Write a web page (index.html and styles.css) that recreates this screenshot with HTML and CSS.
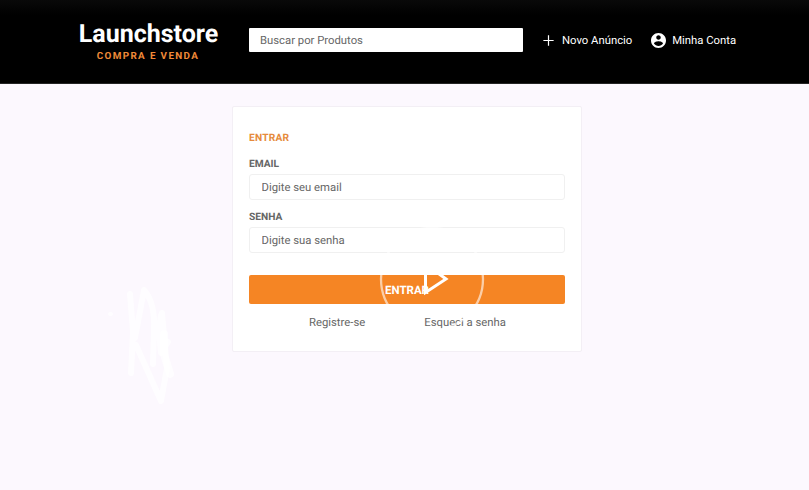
FILE: index.html
```
<!DOCTYPE html>
<html lang="pt-BR">
<head>
<meta charset="utf-8">
<title>Launchstore</title>
<link rel="stylesheet" href="styles.css">
</head>
<body>
<header class="header">
  <a class="logo"><strong class="logo-name">Launchstore</strong><span class="logo-tag">COMPRA E VENDA</span></a>
  <input class="search" type="text" placeholder="Buscar por Produtos">
  <nav class="nav">
    <a class="nav-link"><svg class="plus" viewBox="0 0 12 12"><path d="M6 .4v11.200M.4 6h11.200" stroke="#fff" stroke-width="1.300" fill="none"/></svg><span class="nav-text">Novo Anúncio</span></a>
    <a class="nav-link account"><svg class="user" viewBox="2 2 20 20"><path fill="#fff" d="M12 2C6.48 2 2 6.48 2 12s4.48 10 10 10 10-4.48 10-10S17.52 2 12 2zm0 3c1.66 0 3 1.34 3 3s-1.34 3-3 3-3-1.34-3-3 1.34-3 3-3zm0 14.2c-2.5 0-4.71-1.28-6-3.22.03-1.99 4-3.08 6-3.08 1.99 0 5.97 1.09 6 3.08-1.29 1.94-3.5 3.22-6 3.22z"/></svg><span class="nav-text">Minha Conta</span></a>
  </nav>
</header>
<main class="main">
  <form class="card">
    <h1 class="title">ENTRAR</h1>
    <label class="label" for="email">EMAIL</label>
    <input class="field" id="email" type="text" placeholder="Digite seu email">
    <label class="label" for="senha">SENHA</label>
    <input class="field" id="senha" type="text" placeholder="Digite sua senha">
    <button class="submit" type="button"><span>ENTRAR</span></button>
    <div class="links"><a>Registre-se</a><a>Esqueci a senha</a></div>
    <svg class="play" viewBox="0 0 106 106"><circle cx="53" cy="53" r="51" fill="none" stroke="#fff" stroke-opacity=".6" stroke-width="2.3"/><path d="M46.500 38v28.500L67 53z" fill="none" stroke="#fff" stroke-width="3"/></svg>
  </form>
  <svg class="scribble" viewBox="0 0 110 150"><g fill="none" stroke="#fff" stroke-linecap="round" stroke-linejoin="round" stroke-opacity=".7"><path stroke-width="6" d="M40 24L43 62 41 103M45 68L54 20C61 28 65 40 64 60L63 94M46 75L71 131 77 98 72 43C69 50 69 65 71 83L78 72"/><path stroke-width="8" d="M74 64L74 84 80 104"/><path stroke-width="4" d="M20 44h1"/></g></svg>
</main>
</body>
</html>
```

FILE: styles.css
```
* { box-sizing: border-box; margin: 0; padding: 0; }
body {
  height: 490px;
  overflow: hidden;
  background: #fcf8fe;
  color: #666;
  font: 11.3px/14px Roboto, sans-serif;
  text-rendering: geometricPrecision;
}
input, button { font: inherit; text-rendering: inherit; }
input::placeholder { color: #666; opacity: 1; }
.header {
  display: flex;
  align-items: flex-start;
  height: 84px;
  padding-left: 78px;
  color: #fff;
  background: linear-gradient(#090909, #000 15px);
  border-bottom: 1px solid #242424;
}
.logo {
  display: flex;
  flex-direction: column;
  align-items: center;
  width: 141px;
  padding-top: 22px;
  white-space: nowrap;
}
.logo-name { font-size: 25px; line-height: 25px; font-weight: 700; }
.logo-tag {
  margin: 3px 1px 0 0;
  color: #f08a38;
  font-size: 9.9px;
  font-weight: 700;
  letter-spacing: 1.35px;
}
.search {
  width: 274px;
  height: 24px;
  margin: 28px 0 0 30px;
  padding: 0 11px;
  border: 0;
  border-radius: 1px;
  background: #fff;
}
.nav { display: flex; margin: 32px 0 0 20px; height: 16px; }
.nav-link { display: flex; align-items: center; white-space: nowrap; }
.nav-text { padding-top: 2px; }
.account { margin-left: 19px; }
.plus { width: 11px; height: 11px; margin-right: 8px; }
.user { width: 15px; height: 15px; margin-right: 6px; }
.main { padding-top: 22px; }
.card {
  position: relative;
  width: 350px;
  height: 246px;
  margin-left: 232px;
  padding: 25px 16px 0;
  border: 1px solid #f3eff5;
  border-radius: 2px;
  background: #fff;
}
.title { margin-bottom: 11px; color: #e68b3c; font-size: 10.2px; line-height: 14px; letter-spacing: .2px; }
.label { display: block; margin-bottom: 2px; padding-top: 1px; font-size: 10.2px; font-weight: 700; }
.field {
  display: block;
  width: 316px;
  height: 26px;
  margin-bottom: 10px;
  padding: 0 12px 0 11.5px;
  border: 1px solid #f0f0f0;
  border-radius: 3px;
  background: #fff;
}
.submit {
  display: block;
  width: 316px;
  height: 29px;
  margin-top: 22px;
  border: 0;
  border-radius: 2px;
  background: #f58524;
  color: #fff;
  font-size: 11.5px;
  font-weight: 700;
}
.links { display: flex; gap: 59px; margin: 12px 0 0 60px; }
.play { position: absolute; left: 146px; top: 119px; width: 106px; height: 106px; }
.scribble { position: absolute; left: 90px; top: 270px; width: 110px; height: 150px; }
```
